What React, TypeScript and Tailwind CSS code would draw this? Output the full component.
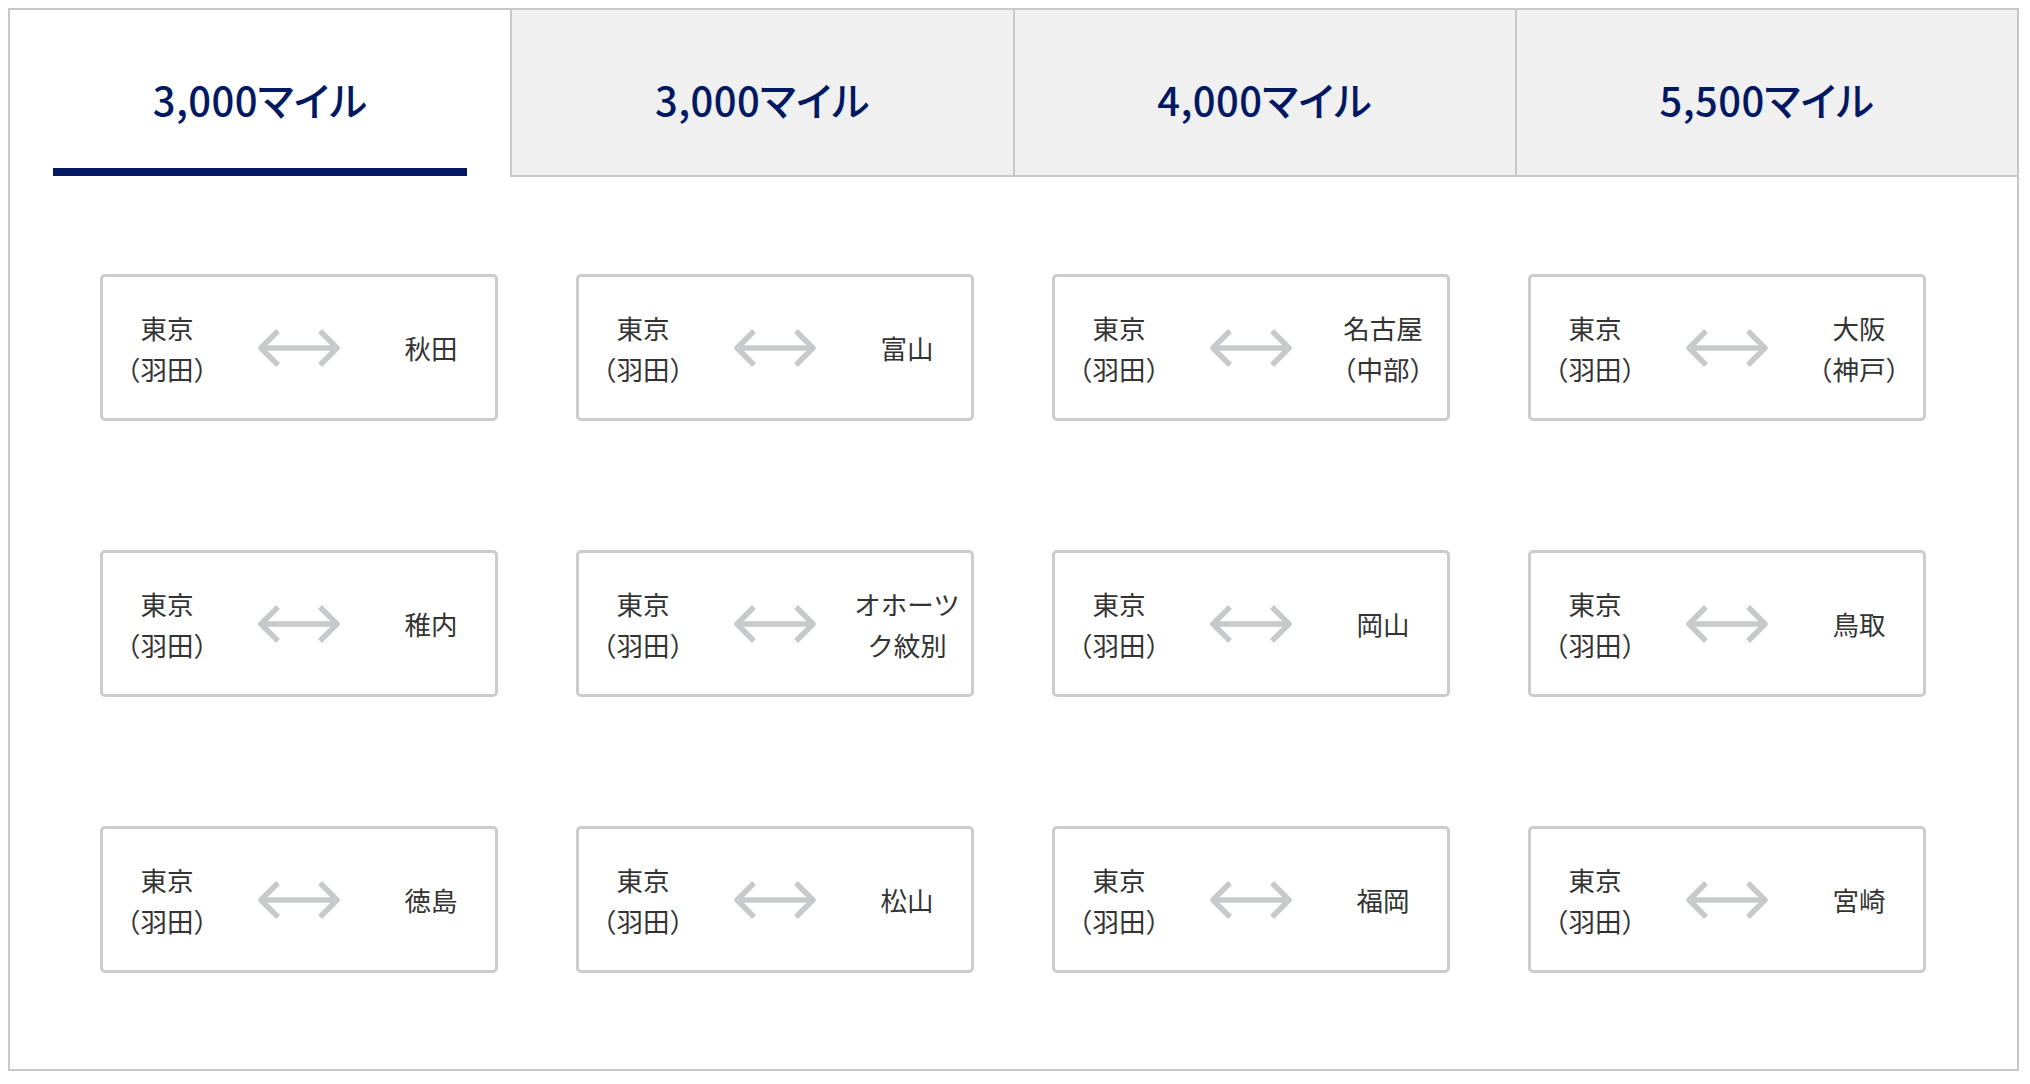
const tabs = ['3,000マイル', '3,000マイル', '4,000マイル', '5,500マイル'];

const routes: string[][] = [
  ['秋田'],
  ['富山'],
  ['名古屋', '（中部）'],
  ['大阪', '（神戸）'],
  ['稚内'],
  ['オホーツク紋別'],
  ['岡山'],
  ['鳥取'],
  ['徳島'],
  ['松山'],
  ['福岡'],
  ['宮崎'],
];

function ArrowIcon() {
  return (
    <svg width="84" height="40" viewBox="0 0 84 40" fill="none">
      <path
        d="M4 20 H80 M21 3 L4 20 L21 37 M63 3 L80 20 L63 37"
        stroke="#c8c9cb"
        strokeWidth="5.5"
        strokeLinejoin="round"
      />
    </svg>
  );
}

function RouteCard({ to }: { to: string[] }) {
  return (
    <div className="h-[147px] border-[3px] border-[#cccccc] rounded-[5px] bg-white flex items-center px-[8px] text-[26.5px] leading-[41px] text-[#333333]">
      <div className="w-[112px] text-center">
        <p>東京</p>
        <p>（羽田）</p>
      </div>
      <div className="flex-1 flex justify-center">
        <ArrowIcon />
      </div>
      <div className="w-[112px] text-center">
        {to.map((t, i) => (
          <p key={i}>{t}</p>
        ))}
      </div>
    </div>
  );
}

export default function App() {
  return (
    <div className="min-h-screen bg-white pt-[8px] pl-[8px] font-['Noto_Sans_CJK_JP','Noto_Sans',sans-serif]">
      <div className="w-[2011px] border-2 border-[#c8c8c8] bg-white">

        {/* Tabs */}
        <div className="flex h-[167px]">
          {tabs.map((label, i) =>
            i === 0 ? (
              <div key={i} className="flex-1 basis-0 flex flex-col bg-white">
                <div className="flex-1 pt-[69px] text-center">
                  <span className="text-[40px] leading-[40px] font-medium tracking-[0.01em] text-[#011963] [font-feature-settings:'palt']">
                    {label}
                  </span>
                </div>
                <div className="h-[8px] mx-[43px] mb-[1px] bg-[#011963]" />
              </div>
            ) : (
              <div
                key={i}
                className="flex-1 basis-0 bg-[#f0f0f0] border-l-2 border-b-2 border-[#c8c8c8] pt-[69px] text-center"
              >
                <span className="text-[40px] leading-[40px] font-medium tracking-[0.01em] text-[#011963] [font-feature-settings:'palt']">
                  {label}
                </span>
              </div>
            )
          )}
        </div>

        {/* Routes */}
        <div className="grid grid-cols-[repeat(4,398px)] gap-x-[78px] gap-y-[129px] px-[90px] pt-[97px] pb-[96px]">
          {routes.map((r, i) => (
            <RouteCard key={i} to={r} />
          ))}
        </div>
      </div>
    </div>
  );
}
